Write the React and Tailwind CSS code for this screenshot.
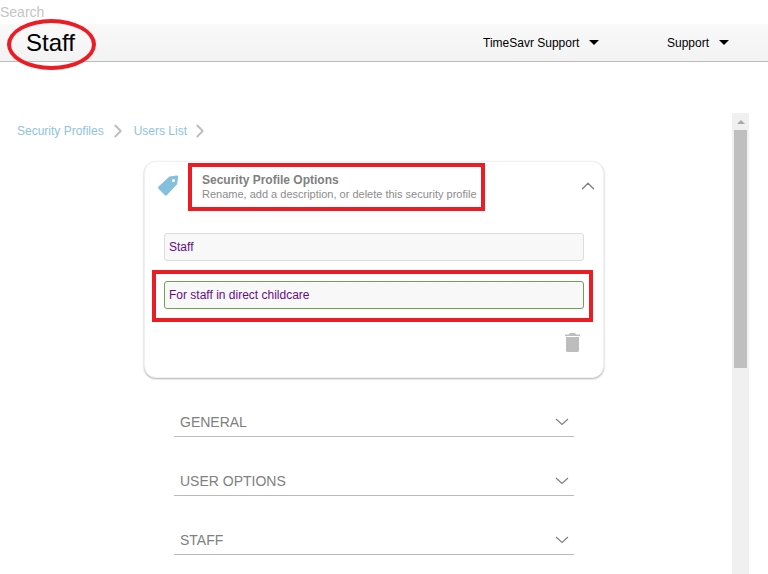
import { ChevronRight, ChevronUp } from 'lucide-react'

const sections = ['GENERAL', 'USER OPTIONS', 'STAFF']

function Caret() {
  return <span className="w-0 h-0 border-x-[5px] border-x-transparent border-t-[5px] border-t-black" />
}

function Section({ title }) {
  return (
    <div className="h-[30px] mb-[29px] border-b border-[#bbbbbb] pl-[6px] pr-[5px] flex items-center justify-between">
      <span className="pt-[2px] text-[14px] text-[#808080]">{title}</span>
      <svg className="w-[14px] h-[8px] text-[#808080]" viewBox="0 0 14 8" fill="none" stroke="currentColor" strokeWidth="1.2">
        <path d="M1 1l6 5.500L13 1" />
      </svg>
    </div>
  )
}

export default function App() {
  return (
    <div className="relative w-[768px] h-[574px] overflow-hidden bg-white font-['Liberation_Sans',Arial,sans-serif]">
      <div className="h-[24px] text-[14px] leading-[24px] text-[#c4c4c4]">Search</div>

      {/* Top bar */}
      <div className="h-[38px] flex items-center border-b border-[#bbbbbb] bg-gradient-to-b from-[#f9f9f9] to-[#f3f3f3]">
        <div className="w-[483px] pl-[26px] text-[24px] text-black">Staff</div>
        <div className="w-[184px] flex items-center gap-[10px] text-[12px] text-black">
          TimeSavr Support <Caret />
        </div>
        <div className="flex items-center gap-[10px] text-[12px] text-black">
          Support <Caret />
        </div>
      </div>

      <div className="flex">
        <div className="w-[732px] shrink-0">
          {/* Breadcrumbs */}
          <div className="mt-[60px] pl-[17px] h-[18px] flex items-center text-[12px] text-[#8fc3dc]">
            Security Profiles
            <ChevronRight className="w-[22px] h-[22px] text-[#bdbdbd] ml-[3px] mr-[5px]" strokeWidth={2} />
            Users List
            <ChevronRight className="w-[22px] h-[22px] text-[#bdbdbd] ml-[2px]" strokeWidth={2} />
          </div>

          {/* Options card */}
          <div className="mt-[21px] ml-[144px] w-[460px] h-[217px] bg-white rounded-[12px] border border-[#f0f0f0] shadow-[0_1px_2px_rgba(0,0,0,0.3)] px-[19px]">
            <div className="h-[71px] flex items-start">
              <svg className="w-[22px] h-[22px] mt-[13px] ml-[-7px] shrink-0" viewBox="0 0 22 22" fill="#84bfdb">
                <path d="M12.500 1.500l7-1c1 0 1.700.7 1.600 1.700l-1 7L10 20c-.7.7-1.600.7-2.300 0L1.600 13.800c-.7-.7-.7-1.600 0-2.300L12.500 1.500zM16.500 4a1.500 1.500 0 100 3 1.500 1.500 0 000-3z" fillRule="evenodd" />
              </svg>
              <div className="ml-[23px] mt-[11px] flex-1">
                <div className="text-[12px] leading-[14px] font-bold text-[#808080]">Security Profile Options</div>
                <div className="text-[11px] leading-[14px] text-[#8c8c8c]">Rename, add a description, or delete this security profile</div>
              </div>
              <ChevronUp className="w-[22px] h-[22px] mt-[13px] mr-[-15px] text-[#808080]" strokeWidth={1.5} />
            </div>

            <input
              readOnly
              value="Staff"
              className="block w-[420px] h-[28px] px-[4px] text-[12px] text-[#660d87] bg-[#f8f8f8] border border-[#dddddd] rounded-[3px] outline-none"
            />
            <input
              readOnly
              value="For staff in direct childcare"
              className="block mt-[20px] w-[420px] h-[28px] px-[4px] text-[12px] text-[#660d87] bg-[#f8f8f8] border border-[#6ca352] rounded-[3px] outline-none"
            />

            <div className="mt-[24px] flex justify-end pr-[4px]">
              <svg className="w-[15px] h-[19px]" viewBox="0 0 15 19" fill="#bdbdbd">
                <path d="M5 0h5l1 1.500h4V3H0V1.500h4L5 0zM1 4h13v13.500c0 .8-.7 1.500-1.500 1.500h-10C1.700 19 1 18.300 1 17.500V4z" />
              </svg>
            </div>
          </div>

          {/* Collapsed sections */}
          <div className="mt-[29px] ml-[174px] w-[400px]">
            {sections.map(s => <Section key={s} title={s} />)}
          </div>
        </div>

        {/* Scrollbar */}
        <div className="mt-[51px] w-[17px] h-[461px] bg-[#f0f0f0] flex flex-col items-center shrink-0">
          <div className="h-[17px] flex items-center justify-center">
            <span className="w-0 h-0 border-x-[4px] border-x-transparent border-b-[4px] border-b-[#a8a8a8]" />
          </div>
          <div className="w-[13px] h-[238px] bg-[#bfbfbf]" />
        </div>
      </div>

      {/* Red annotations drawn over the screenshot */}
      <div className="absolute left-[7px] top-[19px] w-[89px] h-[51px] rounded-[50%] border-[4px] border-[#ec1c24]" />
      <div className="absolute left-[188px] top-[163px] w-[297px] h-[48px] border-[4px] border-[#ec1c24]" />
      <div className="absolute left-[152px] top-[270px] w-[441px] h-[52px] border-[4px] border-[#ec1c24]" />
    </div>
  )
}
